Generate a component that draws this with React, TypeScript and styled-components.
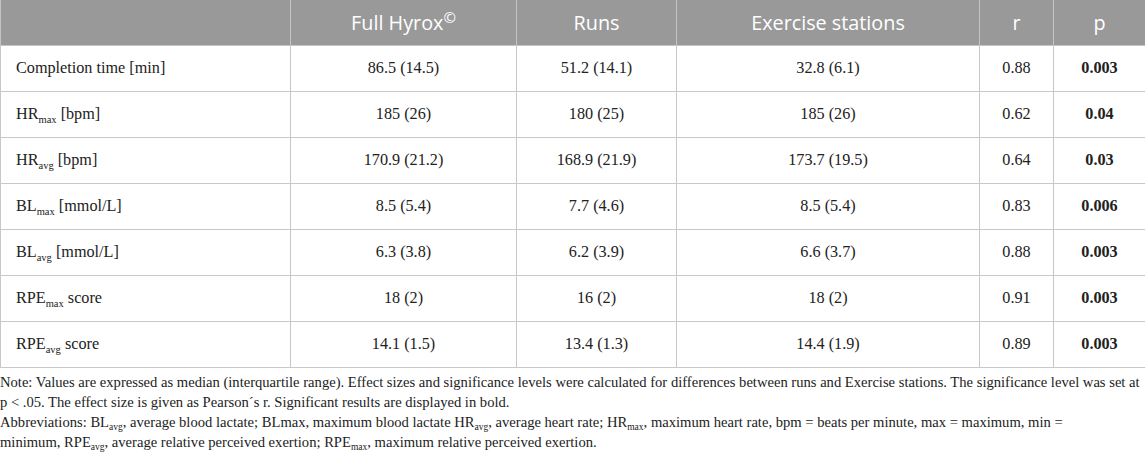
import React from "react";
import styled, { createGlobalStyle } from "styled-components";

type Row = {
  label: React.ReactNode;
  full: string;
  runs: string;
  stations: string;
  r: string;
  p: string;
};

const rows: Row[] = [
  { label: <>Completion time [min]</>, full: "86.5 (14.5)", runs: "51.2 (14.1)", stations: "32.8 (6.1)", r: "0.88", p: "0.003" },
  { label: <>HR<sub>max</sub> [bpm]</>, full: "185 (26)", runs: "180 (25)", stations: "185 (26)", r: "0.62", p: "0.04" },
  { label: <>HR<sub>avg</sub> [bpm]</>, full: "170.9 (21.2)", runs: "168.9 (21.9)", stations: "173.7 (19.5)", r: "0.64", p: "0.03" },
  { label: <>BL<sub>max</sub> [mmol/L]</>, full: "8.5 (5.4)", runs: "7.7 (4.6)", stations: "8.5 (5.4)", r: "0.83", p: "0.006" },
  { label: <>BL<sub>avg</sub> [mmol/L]</>, full: "6.3 (3.8)", runs: "6.2 (3.9)", stations: "6.6 (3.7)", r: "0.88", p: "0.003" },
  { label: <>RPE<sub>max</sub> score</>, full: "18 (2)", runs: "16 (2)", stations: "18 (2)", r: "0.91", p: "0.003" },
  { label: <>RPE<sub>avg</sub> score</>, full: "14.1 (1.5)", runs: "13.4 (1.3)", stations: "14.4 (1.9)", r: "0.89", p: "0.003" },
];

const GlobalStyle = createGlobalStyle`
  body {
    margin: 0;
    background: #fff;
    font-family: "Liberation Serif", "DejaVu Serif", serif;
    color: #222;
  }
`;

export default function App() {
  return (
    <>
      <GlobalStyle />
      <Wrapper>
        <Table>
          <colgroup>
            <col style={{ width: 290 }} />
            <col style={{ width: 226 }} />
            <col style={{ width: 160 }} />
            <col style={{ width: 303 }} />
            <col style={{ width: 74 }} />
            <col style={{ width: 92 }} />
          </colgroup>
          <thead>
            <tr>
              <Th />
              <Th>
                Full Hyrox<sup>©</sup>
              </Th>
              <Th>Runs</Th>
              <Th>Exercise stations</Th>
              <Th>r</Th>
              <Th>p</Th>
            </tr>
          </thead>
          <tbody>
            {rows.map((row, i) => (
              <tr key={i}>
                <Td $left>{row.label}</Td>
                <Td>{row.full}</Td>
                <Td>{row.runs}</Td>
                <Td>{row.stations}</Td>
                <Td>{row.r}</Td>
                <Td $bold>{row.p}</Td>
              </tr>
            ))}
          </tbody>
        </Table>
        <Notes>
          <p>
            Note: Values are expressed as median (interquartile range). Effect sizes and significance levels were
            calculated for differences between runs and Exercise stations. The significance level was set at
            <br />
            p &lt; .05. The effect size is given as Pearson´s r. Significant results are displayed in bold.
          </p>
          <p>
            Abbreviations: BL<sub>avg</sub>, average blood lactate; BLmax, maximum blood lactate HR<sub>avg</sub>,
            average heart rate; HR<sub>max</sub>, maximum heart rate, bpm = beats per minute, max = maximum, min =
            <br />
            minimum, RPE<sub>avg</sub>, average relative perceived exertion; RPE<sub>max</sub>, maximum relative
            perceived exertion.
          </p>
        </Notes>
      </Wrapper>
    </>
  );
}

const Wrapper = styled.div`
  width: 1145px;
`;

const Table = styled.table`
  width: 1145px;
  border-collapse: collapse;
  table-layout: fixed;

  tbody tr {
    height: 46px;
  }

  sub {
    font-size: 10.5px;
    vertical-align: -4px;
    line-height: 0;
  }
`;

const Th = styled.th`
  height: 45px;
  padding: 0 15px;
  background: #999999;
  color: #fff;
  font-family: "Open Sans", "Noto Sans", sans-serif;
  font-weight: 400;
  font-size: 19.8px;
  text-align: center;
  border: 1px solid #c4c4c4;
  border-top: none;

  sup {
    font-size: 15px;
    vertical-align: 7px;
    line-height: 0;
  }
`;

const Td = styled.td<{ $bold?: boolean; $left?: boolean }>`
  padding: 0 15px;
  font-size: 16.2px;
  text-align: ${(p) => (p.$left ? "left" : "center")};
  font-weight: ${(p) => (p.$bold ? 700 : 400)};
  border: 1px solid #c8c8c8;
  color: #222;
  white-space: nowrap;
`;

const Notes = styled.div`
  padding-top: 4px;
  font-size: 14.6px;
  line-height: 20px;
  color: #222;
  white-space: nowrap;

  p {
    margin: 0;
  }

  sub {
    font-size: 9.5px;
    vertical-align: -3px;
    line-height: 0;
  }
`;
